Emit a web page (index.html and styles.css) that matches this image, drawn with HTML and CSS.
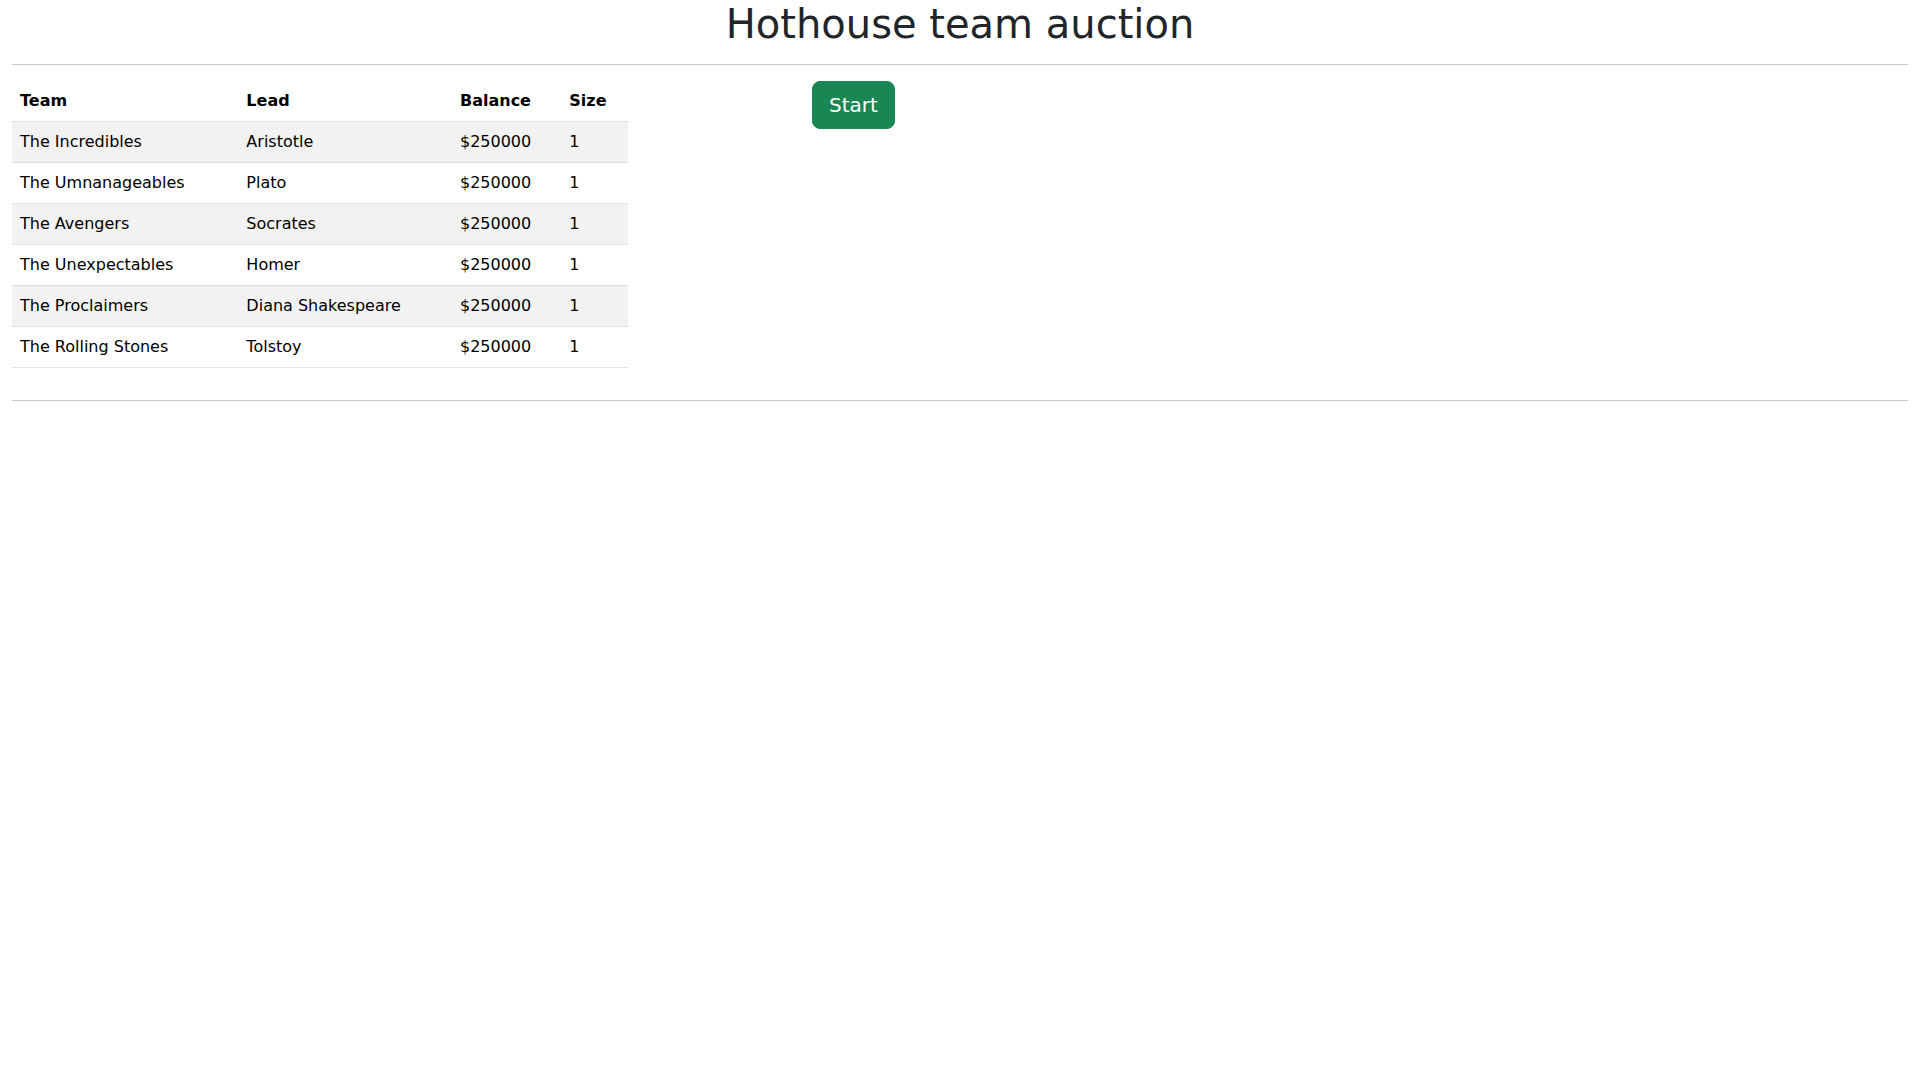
FILE: index.html
```html
<!DOCTYPE html>
<html lang="en">
<head>
  <meta charset="UTF-8">
  <meta name="viewport" content="width=device-width, initial-scale=1.0">
  <title>Hothouse team auction</title>
  <link rel="stylesheet" href="styles.css">
</head>
<body>
  <div class="page">
    <h1 class="title">Hothouse team auction</h1>
    <hr class="divider">

    <div class="main">
      <div class="teams-col">
        <table class="teams">
          <thead>
            <tr>
              <th>Team</th>
              <th>Lead</th>
              <th>Balance</th>
              <th>Size</th>
            </tr>
          </thead>
          <tbody>
            <tr>
              <td>The Incredibles</td>
              <td>Aristotle</td>
              <td>$250000</td>
              <td>1</td>
            </tr>
            <tr>
              <td>The Umnanageables</td>
              <td>Plato</td>
              <td>$250000</td>
              <td>1</td>
            </tr>
            <tr>
              <td>The Avengers</td>
              <td>Socrates</td>
              <td>$250000</td>
              <td>1</td>
            </tr>
            <tr>
              <td>The Unexpectables</td>
              <td>Homer</td>
              <td>$250000</td>
              <td>1</td>
            </tr>
            <tr>
              <td>The Proclaimers</td>
              <td>Diana Shakespeare</td>
              <td>$250000</td>
              <td>1</td>
            </tr>
            <tr>
              <td>The Rolling Stones</td>
              <td>Tolstoy</td>
              <td>$250000</td>
              <td>1</td>
            </tr>
          </tbody>
        </table>
      </div>

      <div class="action-col">
        <button class="start-button">Start</button>
      </div>
    </div>

    <hr class="divider">
  </div>
</body>
</html>
```

FILE: styles.css
```css
* {
  box-sizing: border-box;
}

body {
  margin: 0;
  font-family: 'DejaVu Sans', sans-serif;
  font-size: 16px;
  line-height: 1.5;
  color: #212529;
  background-color: #fff;
}

.page {
  padding: 0 12px;
}

.title {
  margin: 0 0 8px 0;
  font-size: 40px;
  font-weight: 500;
  line-height: 1.2;
  text-align: center;
}

.divider {
  margin: 16px 0;
  border: 0;
  border-top: 1px solid #212529;
  opacity: 0.25;
}

.main {
  display: flex;
  margin: 0 -12px;
}

.teams-col {
  flex: 0 0 33.333333%;
  padding: 0 12px;
}

.action-col {
  flex: 0 0 auto;
  margin-left: 8.333333%;
  padding: 0 12px;
}

.teams {
  width: 100%;
  margin-bottom: 16px;
  border-collapse: collapse;
  color: #000;
}

.teams th,
.teams td {
  padding: 8px;
  text-align: left;
  vertical-align: top;
  border-bottom: 1px solid #dee2e6;
}

.teams th {
  font-weight: bold;
}

.teams tbody tr:nth-child(odd) {
  background-color: #f2f2f2;
}

.start-button {
  padding: 8px 16px;
  font-family: inherit;
  font-size: 20px;
  line-height: 1.5;
  color: #fff;
  background-color: #198754;
  border: 1px solid #198754;
  border-radius: 8px;
  cursor: pointer;
}
```
